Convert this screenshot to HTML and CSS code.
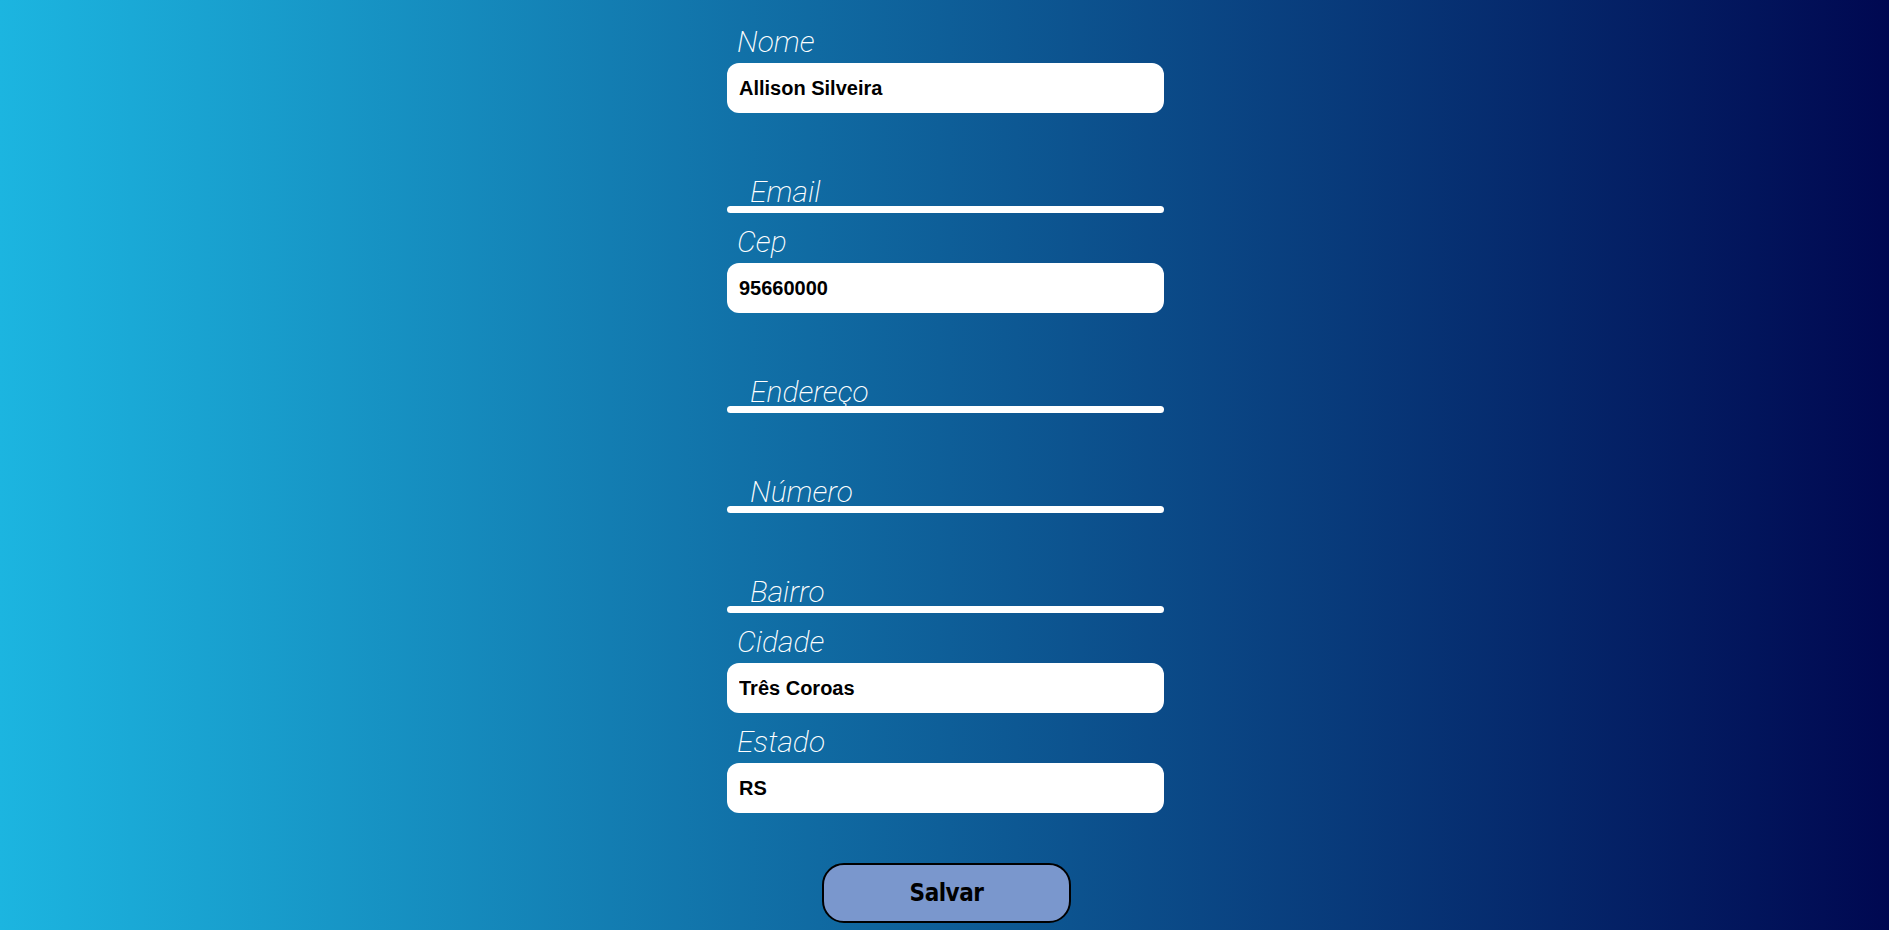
FILE: index.html
```html
<!DOCTYPE html>
<html lang="pt-BR">
  <head>
    <meta charset="UTF-8" />
    <meta name="viewport" content="width=device-width, initial-scale=1.0" />
    <title>Cadastro</title>
    <link rel="stylesheet" href="styles.css">
  </head>
  <body>
    <form class="form" onsubmit="return false">
      <div class="field">
        <label for="nome">Nome</label>
        <input type="text" id="nome" class="box" value="Allison Silveira" />
      </div>

      <div class="field line">
        <input type="email" id="email" class="flat" placeholder="Email" />
      </div>

      <div class="field">
        <label for="cep">Cep</label>
        <input type="text" id="cep" class="box" value="95660000" />
      </div>

      <div class="field line">
        <input type="text" id="endereco" class="flat" placeholder="Endereço" />
      </div>

      <div class="field line">
        <input type="text" id="numero" class="flat" placeholder="Número" />
      </div>

      <div class="field line">
        <input type="text" id="bairro" class="flat" placeholder="Bairro" />
      </div>

      <div class="field">
        <label for="cidade">Cidade</label>
        <input type="text" id="cidade" class="box" value="Três Coroas" />
      </div>

      <div class="field">
        <label for="estado">Estado</label>
        <input type="text" id="estado" class="box" value="RS" />
      </div>

      <div class="actions">
        <button type="submit" class="btn-save">Salvar</button>
      </div>
    </form>

    <script>
      const nome = document.getElementById("nome");
      nome.focus();
      nome.setSelectionRange(nome.value.length, nome.value.length);
    </script>
  </body>
</html>
```

FILE: styles.css
```css
html {
  background: linear-gradient(to right, #1cb5e0, #000851);
  min-height: 100%;
}
body {
  margin: 0;
  padding: 0 0 0 2px;
  overflow: hidden;
}
.form {
  width: 437px;
  margin: 0 auto;
  padding-top: 13px;
}
.field {
  height: 100px;
  display: flex;
  flex-direction: column;
  justify-content: flex-end;
}
.field label {
  display: block;
  padding-left: 10px;
  margin-bottom: 3px;
  font-family: Roboto, "Liberation Sans", sans-serif;
  font-weight: 200;
  font-style: italic;
  font-size: 30px;
  line-height: 36px;
  color: #fff;
}
.box {
  box-sizing: border-box;
  width: 100%;
  height: 50px;
  padding: 0 12px;
  border: none;
  border-radius: 12px;
  background-color: #fff;
  font-family: "Liberation Sans", Arial, sans-serif;
  font-weight: bold;
  font-size: 20px;
  color: #000;
  caret-color: #000;
  outline: none;
}
.flat {
  box-sizing: border-box;
  width: 100%;
  height: 29px;
  padding: 0 0 0 23px;
  border: none;
  background: transparent;
  font-family: Roboto, "Liberation Sans", sans-serif;
  font-weight: 200;
  font-style: italic;
  font-size: 30px;
  color: #fff;
  outline: none;
}
.flat::placeholder {
  color: #fff;
  opacity: 1;
}
.line::after {
  content: "";
  display: block;
  height: 7px;
  background-color: #fff;
  border-radius: 4px;
}
.actions {
  display: flex;
  justify-content: center;
  margin-top: 50px;
}
.btn-save {
  width: 249px;
  height: 60px;
  margin-left: 2px;
  border: 2px solid #000;
  border-radius: 22px;
  background-color: #7a97cd;
  font-family: "DejaVu Sans Condensed", "DejaVu Sans", sans-serif;
  font-weight: bold;
  font-size: 24px;
  letter-spacing: -0.5px;
  color: #000;
  cursor: pointer;
}
```
